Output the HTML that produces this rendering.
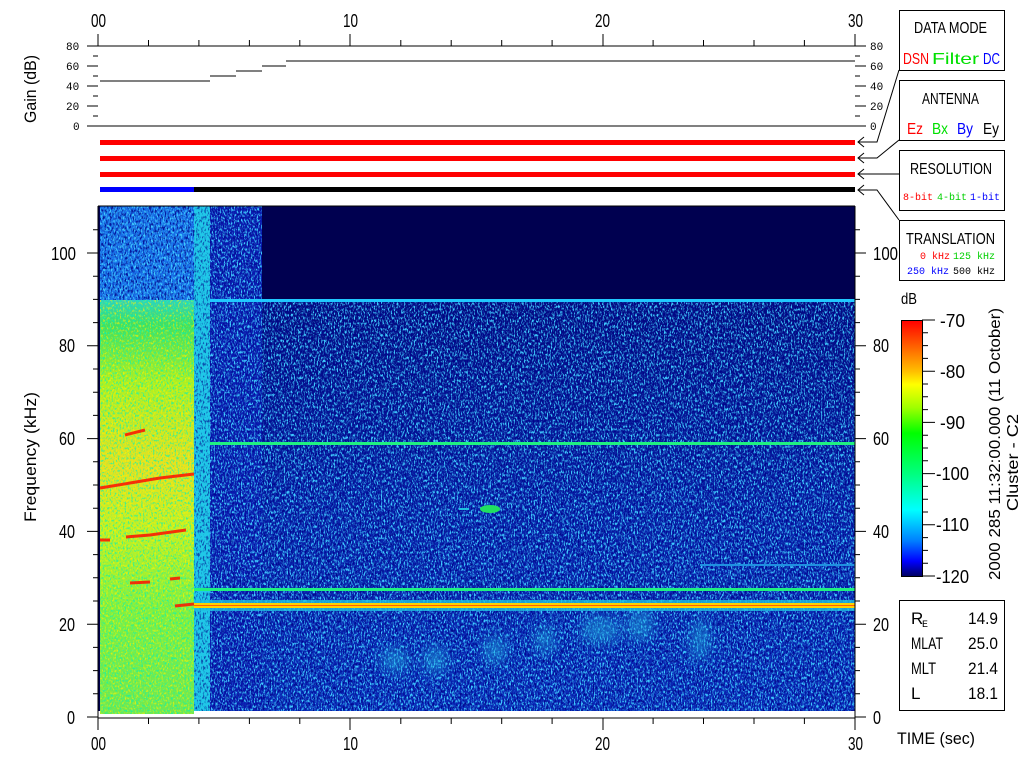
<!DOCTYPE html>
<html><head><meta charset="utf-8"><style>
html,body{margin:0;padding:0;background:#fff;width:1024px;height:768px;overflow:hidden}
svg{display:block}
text{font-family:"Liberation Sans",sans-serif;fill:#000}
.m{font-family:"Liberation Mono",monospace}
</style></head><body>
<svg width="1024" height="768" viewBox="0 0 1024 768" xmlns="http://www.w3.org/2000/svg">
<defs>
<filter id="nb" x="0" y="0" width="100%" height="100%">
<feTurbulence type="fractalNoise" baseFrequency="0.7 0.35" numOctaves="2" seed="3"/>
<feColorMatrix type="matrix" values="0 0 0 0 0.05  0 0 0 0 0.6  0 0 0 0 1  5 0 0 0 -2.4"/>
</filter>
<filter id="nd" x="0" y="0" width="100%" height="100%">
<feTurbulence type="fractalNoise" baseFrequency="0.6 0.3" numOctaves="2" seed="9"/>
<feColorMatrix type="matrix" values="0 0 0 0 0  0 0 0 0 0  0 0 0 0 0.25  -5 0 0 0 2.5"/>
</filter>
<filter id="ny" x="0" y="0" width="100%" height="100%">
<feTurbulence type="fractalNoise" baseFrequency="0.6 0.4" numOctaves="2" seed="5"/>
<feColorMatrix type="matrix" values="0 0 0 0 1  0 0 0 0 0.9  0 0 0 0 0  4 0 0 0 -2"/>
</filter>
<filter id="ng" x="0" y="0" width="100%" height="100%">
<feTurbulence type="fractalNoise" baseFrequency="0.6 0.4" numOctaves="2" seed="11"/>
<feColorMatrix type="matrix" values="0 0 0 0 0  0 0 0 0 0.9  0 0 0 0 0.5  4 0 0 0 -2"/>
</filter>
<filter id="bl"><feGaussianBlur stdDeviation="6"/></filter>
<linearGradient id="cb" x1="0" y1="0" x2="0" y2="1">
<stop offset="0" stop-color="#ff0000"/><stop offset="0.1" stop-color="#ff6000"/>
<stop offset="0.2" stop-color="#ffc000"/><stop offset="0.25" stop-color="#ffff00"/>
<stop offset="0.34" stop-color="#a0ff00"/><stop offset="0.44" stop-color="#00ff00"/>
<stop offset="0.6" stop-color="#00ff80"/><stop offset="0.74" stop-color="#00ffff"/>
<stop offset="0.86" stop-color="#0080ff"/><stop offset="0.94" stop-color="#0000ff"/>
<stop offset="1" stop-color="#000060"/></linearGradient>
<linearGradient id="lo" x1="0" y1="0" x2="0" y2="1">
<stop offset="0" stop-color="#040c80"/><stop offset="0.5" stop-color="#0820a8"/><stop offset="1" stop-color="#0a2ab8"/></linearGradient>
<linearGradient id="hot" x1="0" y1="0" x2="0" y2="1">
<stop offset="0" stop-color="#30d0c0"/><stop offset="0.06" stop-color="#40e060"/>
<stop offset="0.2" stop-color="#b0f020"/><stop offset="0.4" stop-color="#e8e020"/>
<stop offset="0.55" stop-color="#c8f020"/><stop offset="0.75" stop-color="#80f040"/>
<stop offset="1" stop-color="#70e850"/></linearGradient>
</defs>

<!-- top axis labels -->
<g font-size="18">
<text x="91" y="27" textLength="15" lengthAdjust="spacingAndGlyphs">00</text>
<text x="343" y="27" textLength="15" lengthAdjust="spacingAndGlyphs">10</text>
<text x="595" y="27" textLength="15" lengthAdjust="spacingAndGlyphs">20</text>
<text x="848" y="27" textLength="15" lengthAdjust="spacingAndGlyphs">30</text>
</g>

<!-- gain panel -->
<g stroke="#000" stroke-width="1" fill="none">
<path d="M98 46H855M98 126H855M98 34V46M350 34V46M603 34V46M855 34V46"/>
<path d="M148.5 40V46M198.9 40V46M249.4 40V46M299.8 40V46M400.8 40V46M451.2 40V46M501.7 40V46M552.1 40V46M653.1 40V46M703.5 40V46M754 40V46M804.4 40V46"/>
<path d="M87 46H98M87 66H98M87 86H98M87 106H98M87 126H98M93 56H98M93 76H98M93 96H98M93 116H98"/>
<path d="M855 46H866M855 66H866M855 86H866M855 106H866M855 126H866M855 56H860M855 76H860M855 96H860M855 116H860"/>
<path d="M100 81H210M210 76H236M236 71H262M262 66H286M286 61H855"/>
</g>
<g font-size="11">
<text x="66" y="50" class="m">80</text><text x="66" y="70" class="m">60</text><text x="66" y="90" class="m">40</text><text x="66" y="110" class="m">20</text><text x="73" y="130" class="m">0</text>
<text x="870" y="50" class="m">80</text><text x="870" y="70" class="m">60</text><text x="870" y="90" class="m">40</text><text x="870" y="110" class="m">20</text><text x="870" y="130" class="m">0</text>
</g>
<text transform="translate(36,123) rotate(-90)" font-size="17" textLength="68" lengthAdjust="spacingAndGlyphs">Gain (dB)</text>

<!-- status bars -->
<rect x="100" y="140" width="755" height="5" fill="#ff0000"/>
<rect x="100" y="156" width="755" height="5" fill="#ff0000"/>
<rect x="100" y="172" width="755" height="5" fill="#ff0000"/>
<rect x="100" y="187" width="94" height="5" fill="#0000ff"/>
<rect x="194" y="187" width="661" height="5" fill="#000"/>

<!-- arrows -->
<g stroke="#000" fill="none">
<path d="M899 70L877 142H858M864 137L858 142L864 147"/>
<path d="M899 140L877 158H858M864 153L858 158L864 163"/>
<path d="M899 174H858M864 169L858 174L864 179"/>
<path d="M899 220L877 190H858M864 185L858 190L864 195"/>
</g>

<!-- boxes -->
<g fill="none" stroke="#000">
<rect x="899.5" y="10.5" width="105" height="60"/>
<rect x="899.5" y="80.5" width="105" height="60"/>
<rect x="899.5" y="150.5" width="105" height="60"/>
<rect x="899.5" y="220.5" width="105" height="60"/>
<rect x="899.5" y="600.5" width="105" height="110"/>
</g>
<g font-size="16" lengthAdjust="spacingAndGlyphs">
<text x="914" y="33" textLength="73" lengthAdjust="spacingAndGlyphs">DATA MODE</text>
<text x="903" y="64" textLength="26" lengthAdjust="spacingAndGlyphs" style="fill:#ff0000">DSN</text>
<text x="932" y="64" textLength="47" lengthAdjust="spacingAndGlyphs" style="fill:#00e000">Filter</text>
<text x="983" y="64" textLength="17" lengthAdjust="spacingAndGlyphs" style="fill:#0000ff">DC</text>
<text x="922" y="104" textLength="57" lengthAdjust="spacingAndGlyphs">ANTENNA</text>
<text x="907" y="134" textLength="16" lengthAdjust="spacingAndGlyphs" style="fill:#ff0000">Ez</text>
<text x="932" y="134" textLength="16" lengthAdjust="spacingAndGlyphs" style="fill:#00e000">Bx</text>
<text x="957" y="134" textLength="16" lengthAdjust="spacingAndGlyphs" style="fill:#0000ff">By</text>
<text x="983" y="134" textLength="16" lengthAdjust="spacingAndGlyphs">Ey</text>
<text x="910" y="174" textLength="82" lengthAdjust="spacingAndGlyphs">RESOLUTION</text>
<text x="906" y="244" textLength="89" lengthAdjust="spacingAndGlyphs">TRANSLATION</text>
</g>
<text x="903" y="200" font-size="10" class="m" style="fill:#ff0000">8-bit</text>
<text x="937" y="200" font-size="10" class="m" style="fill:#00d000">4-bit</text>
<text x="970" y="200" font-size="10" class="m" style="fill:#0000ff">1-bit</text>
<text x="920" y="259" font-size="10" class="m" style="fill:#ff0000">0 kHz</text>
<text x="953" y="259" font-size="10" class="m" style="fill:#00d000">125 kHz</text>
<text x="907" y="274" font-size="10" class="m" style="fill:#0000ff">250 kHz</text>
<text x="953" y="274" font-size="10" class="m">500 kHz</text>

<!-- spectrogram -->
<rect x="98" y="206" width="757" height="505" fill="#000050"/>
<rect x="210" y="300" width="645" height="411" fill="url(#lo)"/>
<rect x="210" y="300" width="645" height="411" filter="url(#nb)"/>
<rect x="210" y="206" width="52" height="505" fill="#0a1cb0"/>
<rect x="210" y="206" width="52" height="505" filter="url(#nb)"/>
<rect x="210" y="206" width="52" height="505" filter="url(#nd)" opacity="0.7"/>
<rect x="262" y="300" width="593" height="411" filter="url(#nd)" opacity="0.85"/>
<!-- blobs -->
<g filter="url(#bl)" fill="#20b0e0" opacity="0.5">
<ellipse cx="395" cy="660" rx="14" ry="12"/><ellipse cx="435" cy="660" rx="12" ry="14"/>
<ellipse cx="495" cy="650" rx="12" ry="14"/><ellipse cx="600" cy="630" rx="20" ry="14"/>
<ellipse cx="640" cy="625" rx="14" ry="16"/><ellipse cx="700" cy="640" rx="10" ry="20"/>
<ellipse cx="545" cy="640" rx="10" ry="14"/>
</g>
<ellipse cx="490" cy="509" rx="10" ry="4" fill="#20e060"/>
<rect x="459" y="508" width="10" height="2" fill="#20c0e0"/>
<!-- left hot region -->
<rect x="100" y="206" width="94" height="94" fill="#1870e8"/>
<rect x="100" y="206" width="94" height="94" filter="url(#nb)"/>
<rect x="100" y="206" width="94" height="94" filter="url(#nd)" opacity="0.8"/>
<rect x="100" y="300" width="94" height="414" fill="url(#hot)"/>
<rect x="100" y="300" width="94" height="414" filter="url(#ny)" opacity="0.7"/>
<rect x="100" y="300" width="94" height="414" filter="url(#ng)" opacity="0.7"/>
<g stroke="#ff1000" stroke-width="3" fill="none" opacity="0.85">
<path d="M100 488L130 483L160 478L194 474"/>
<path d="M126 537L150 535L186 530"/>
<path d="M130 583L150 582M170 579L180 578"/>
<path d="M175 606L194 604"/>
<path d="M125 435L145 430"/>
<path d="M100 540L110 540"/>
</g>
<rect x="194" y="206" width="16" height="505" fill="#20c8e8"/>
<rect x="194" y="206" width="16" height="505" filter="url(#nd)" opacity="0.6"/>
<!-- lines -->
<rect x="210" y="299" width="645" height="3" fill="#20c8ff"/>
<rect x="210" y="442" width="645" height="3" fill="#20f080"/>
<rect x="194" y="588" width="661" height="3" fill="#20f080"/>
<rect x="700" y="564" width="155" height="2" fill="#2090e0"/>
<rect x="194" y="600" width="661" height="11" fill="#20c0e0" opacity="0.8"/>
<rect x="194" y="603" width="661" height="5" fill="#ffd000"/>
<rect x="194" y="605" width="661" height="1" fill="#ff6000"/>

<!-- frame & ticks -->
<g stroke="#000" fill="none">
<path d="M98 206H855M98 206V718M855 206V718M98 718H855"/>
<path d="M98 718V730M350 718V730M603 718V730M855 718V730"/>
<path d="M148.5 718V724M198.9 718V724M249.4 718V724M299.8 718V724M400.8 718V724M451.2 718V724M501.7 718V724M552.1 718V724M653.1 718V724M703.5 718V724M754 718V724M804.4 718V724"/>
<path d="M87 717H98M87 624.2H98M87 531.4H98M87 438.6H98M87 345.8H98M87 253H98"/>
<path d="M93 693.8H98M93 670.6H98M93 647.4H98M93 601H98M93 577.8H98M93 554.6H98M93 508.2H98M93 485H98M93 461.8H98M93 415.4H98M93 392.2H98M93 369H98M93 322.6H98M93 299.4H98M93 276.2H98M93 229.8H98"/>
<path d="M855 717H866M855 624.2H866M855 531.4H866M855 438.6H866M855 345.8H866M855 253H866"/>
<path d="M855 693.8H860M855 670.6H860M855 647.4H860M855 601H860M855 577.8H860M855 554.6H860M855 508.2H860M855 485H860M855 461.8H860M855 415.4H860M855 392.2H860M855 369H860M855 322.6H860M855 299.4H860M855 276.2H860M855 229.8H860"/>
</g>
<g font-size="18">
<text x="67" y="724" textLength="8" lengthAdjust="spacingAndGlyphs">0</text>
<text x="59" y="631" textLength="16" lengthAdjust="spacingAndGlyphs">20</text>
<text x="59" y="538" textLength="16" lengthAdjust="spacingAndGlyphs">40</text>
<text x="59" y="445" textLength="16" lengthAdjust="spacingAndGlyphs">60</text>
<text x="59" y="352" textLength="16" lengthAdjust="spacingAndGlyphs">80</text>
<text x="51" y="260" textLength="25" lengthAdjust="spacingAndGlyphs">100</text>
<text x="873" y="724" textLength="8" lengthAdjust="spacingAndGlyphs">0</text>
<text x="873" y="631" textLength="16" lengthAdjust="spacingAndGlyphs">20</text>
<text x="873" y="538" textLength="16" lengthAdjust="spacingAndGlyphs">40</text>
<text x="873" y="445" textLength="16" lengthAdjust="spacingAndGlyphs">60</text>
<text x="873" y="352" textLength="16" lengthAdjust="spacingAndGlyphs">80</text>
<text x="873" y="260" textLength="25" lengthAdjust="spacingAndGlyphs">100</text>
<text x="91" y="750" textLength="15" lengthAdjust="spacingAndGlyphs">00</text>
<text x="343" y="750" textLength="15" lengthAdjust="spacingAndGlyphs">10</text>
<text x="595" y="750" textLength="15" lengthAdjust="spacingAndGlyphs">20</text>
<text x="848" y="750" textLength="15" lengthAdjust="spacingAndGlyphs">30</text>
</g>
<text transform="translate(36,522) rotate(-90)" font-size="17" textLength="130" lengthAdjust="spacingAndGlyphs">Frequency (kHz)</text>
<text x="897" y="744" font-size="17" textLength="78" lengthAdjust="spacingAndGlyphs">TIME (sec)</text>

<!-- colorbar -->
<text x="901" y="304" font-size="16" textLength="16" lengthAdjust="spacingAndGlyphs">dB</text>
<rect x="901.5" y="320.5" width="21" height="256" fill="url(#cb)" stroke="#000"/>
<g stroke="#000">
<path d="M922 320H935M922 371.2H935M922 422.4H935M922 473.6H935M922 524.8H935M922 576H935"/>
<path d="M922 332.8H928M922 345.6H928M922 358.4H928M922 384H928M922 396.8H928M922 409.6H928M922 435.2H928M922 448H928M922 460.8H928M922 486.4H928M922 499.2H928M922 512H928M922 537.6H928M922 550.4H928M922 563.2H928"/>
</g>
<g font-size="18">
<text x="940" y="327" textLength="25" lengthAdjust="spacingAndGlyphs">-70</text>
<text x="940" y="378" textLength="25" lengthAdjust="spacingAndGlyphs">-80</text>
<text x="940" y="429" textLength="25" lengthAdjust="spacingAndGlyphs">-90</text>
<text x="936" y="480" textLength="33" lengthAdjust="spacingAndGlyphs">-100</text>
<text x="936" y="531" textLength="33" lengthAdjust="spacingAndGlyphs">-110</text>
<text x="936" y="583" textLength="33" lengthAdjust="spacingAndGlyphs">-120</text>
</g>
<text transform="translate(1000,580) rotate(-90)" font-size="16" textLength="272" lengthAdjust="spacingAndGlyphs">2000 285 11:32:00.000 (11 October)</text>
<text transform="translate(1018,511) rotate(-90)" font-size="16" textLength="97" lengthAdjust="spacingAndGlyphs">Cluster - C2</text>

<!-- info box -->
<g font-size="17">
<text x="911" y="624">R</text><text x="922" y="627" font-size="10" class="m">E</text>
<text x="968" y="624" textLength="30" lengthAdjust="spacingAndGlyphs">14.9</text>
<text x="911" y="649" textLength="32" lengthAdjust="spacingAndGlyphs">MLAT</text><text x="968" y="649" textLength="30" lengthAdjust="spacingAndGlyphs">25.0</text>
<text x="911" y="674" textLength="25" lengthAdjust="spacingAndGlyphs">MLT</text><text x="968" y="674" textLength="30" lengthAdjust="spacingAndGlyphs">21.4</text>
<text x="911" y="699">L</text><text x="968" y="699" textLength="30" lengthAdjust="spacingAndGlyphs">18.1</text>
</g>
</svg>
</body></html>
